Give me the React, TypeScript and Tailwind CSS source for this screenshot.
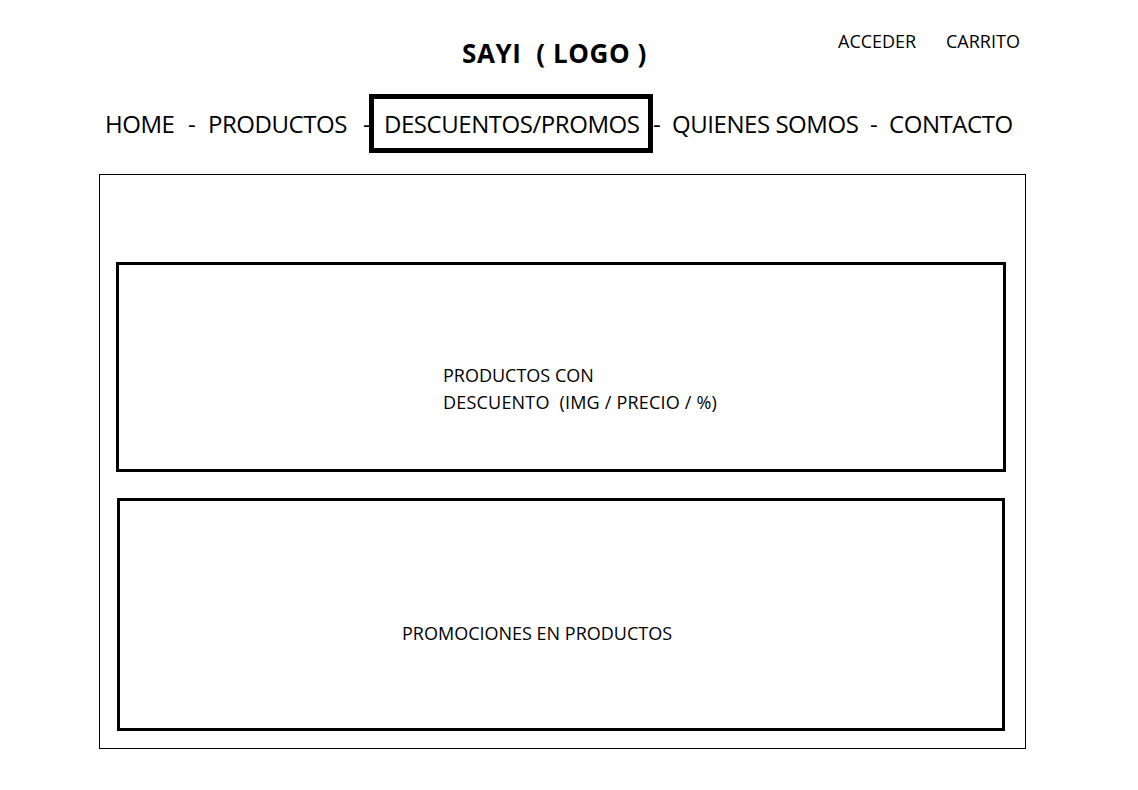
import React from "react";

export default function App() {
  return (
    <div className="w-[1138px] h-[790px] bg-white text-black font-['Open_Sans',sans-serif] overflow-hidden">
      {/* Top bar */}
      <div className="h-[94px]">
        <div className="flex items-start">
          <div className="ml-[462px] w-[376px] mt-[40px] text-[26px] font-bold leading-none tracking-[0.6px] whitespace-pre">
            SAYI  ( LOGO )
          </div>
          <div className="w-[108px] mt-[32px] text-[18px] leading-none">ACCEDER</div>
          <div className="mt-[32px] text-[18px] leading-none">CARRITO</div>
        </div>
      </div>

      {/* Nav */}
      <nav className="flex items-center h-[59px] pl-[105px] text-[24px] leading-none tracking-[-0.45px]">
        <span className="w-[83px]">HOME</span>
        <span className="w-[20px]">-</span>
        <span className="w-[155px]">PRODUCTOS</span>
        <span className="w-[6px] overflow-visible">-</span>
        <span className="w-[284px] h-[59px] border-[5px] border-black flex items-center pl-[10px] whitespace-nowrap">
          DESCUENTOS/PROMOS
        </span>
        <span className="w-[19px]">-</span>
        <span className="w-[198px] whitespace-nowrap">QUIENES SOMOS</span>
        <span className="w-[19px]">-</span>
        <span>CONTACTO</span>
      </nav>

      {/* Content */}
      <div className="mt-[21px] ml-[99px] w-[927px] h-[575px] border border-black">
        <div className="mt-[87px] ml-[16px] w-[890px] h-[210px] border-[3px] border-black pt-[97px] pl-[324px] text-[18px] leading-[27px]">
          <div>PRODUCTOS CON</div>
          <div className="whitespace-pre tracking-[0.2px]">DESCUENTO  (IMG / PRECIO / %)</div>
        </div>
        <div className="mt-[26px] ml-[17px] w-[888px] h-[233px] border-[3px] border-black pt-[119px] pl-[282px] text-[18px] leading-[26px]">
          PROMOCIONES EN PRODUCTOS
        </div>
      </div>
    </div>
  );
}
